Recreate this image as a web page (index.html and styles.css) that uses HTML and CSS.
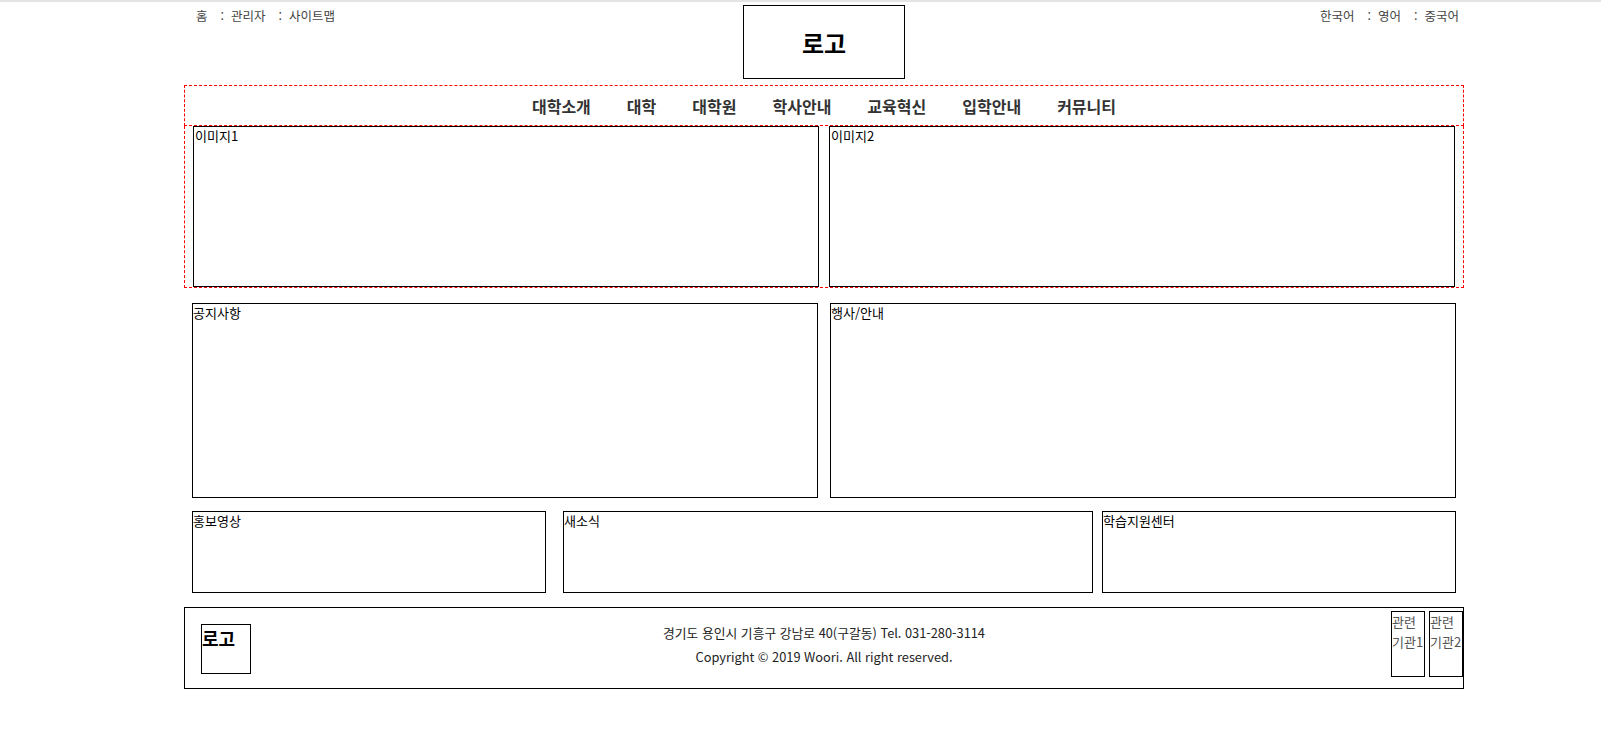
FILE: index.html
```html
<!DOCTYPE html>
<html lang="ko">
<head>
    <meta charset="utf-8">
    <title>우리대학교</title>
    <link rel="stylesheet" href="styles.css">
</head>
<body>
    <div class="wrap">
        <!-- 상단 헤더 -->
        <header class="header">
            <ul class="util util-left">
                <li>홈</li>
                <li>관리자</li>
                <li>사이트맵</li>
            </ul>
            <h1 class="logo">로고</h1>
            <ul class="util util-right">
                <li>한국어</li>
                <li>영어</li>
                <li>중국어</li>
            </ul>
        </header>

        <!-- 메인 메뉴 -->
        <nav class="gnb">
            <ul>
                <li>대학소개</li>
                <li>대학</li>
                <li>대학원</li>
                <li>학사안내</li>
                <li>교육혁신</li>
                <li>입학안내</li>
                <li>커뮤니티</li>
            </ul>
        </nav>

        <!-- 비주얼 -->
        <section class="visual">
            <div class="box visual-img">이미지1</div>
            <div class="box visual-img">이미지2</div>
        </section>

        <!-- 게시판 -->
        <section class="board">
            <div class="box board-box">공지사항</div>
            <div class="box board-box">행사/안내</div>
        </section>

        <section class="banner">
            <div class="box banner-video">홍보영상</div>
            <div class="box banner-news">새소식</div>
            <div class="box banner-center">학습지원센터</div>
        </section>

        <!-- 푸터 -->
        <footer class="footer">
            <div class="footer-left">
                <div class="footer-logo">로고</div>
            </div>
            <div class="footer-info">
                <p>경기도 용인시 기흥구 강남로 40(구갈동) Tel. 031-280-3114</p>
                <p>Copyright &copy; 2019 Woori. All right reserved.</p>
            </div>
            <div class="footer-right">
                <div class="family">관련 기관1</div>
                <div class="family">관련 기관2</div>
            </div>
        </footer>
    </div>
</body>
</html>
```

FILE: styles.css
```css
* {
    box-sizing: border-box;
}

body {
    margin: 0;
    border-top: 2px solid #e4e4e4;
    font-family: "Noto Sans CJK KR", "Noto Sans", sans-serif;
    font-size: 13px;
    color: #000;
    background-color: #fff;
}

ul, p, h1 {
    margin: 0;
    padding: 0;
}

ul {
    list-style: none;
}

.wrap {
    width: 1280px;
    margin-left: 184px;
}

/* header */
.header {
    display: grid;
    grid-template-columns: 1fr auto 1fr;
    margin-bottom: 6px;
}

.util {
    display: flex;
    padding-top: 4px;
    font-size: 12.5px;
    color: #444;
}

.util-left {
    padding-left: 12px;
}

.util-right {
    justify-content: flex-end;
    padding-right: 5px;
}

.util li + li::before {
    content: ":";
    margin: 0 7px 0 13px;
}

.logo {
    width: 162px;
    height: 74px;
    margin-top: 3px;
    border: 1px solid #000;
    display: flex;
    align-items: center;
    justify-content: center;
    font-size: 24px;
    font-weight: bold;
}

/* gnb */
.gnb {
    height: 41px;
    border: 1px dashed red;
}

.gnb ul {
    display: flex;
    justify-content: center;
    align-items: center;
    gap: 36px;
    height: 100%;
    font-size: 16px;
    font-weight: bold;
    color: #333;
}

/* boxes */
.box {
    border: 1px solid #000;
    line-height: 1.45;
}

.visual {
    display: flex;
    gap: 10px;
    padding: 0 8px;
    border: 1px dashed red;
    border-top: none;
}

.visual-img {
    width: 626px;
    height: 161px;
    padding-left: 1px;
}

.board {
    display: flex;
    gap: 12px;
    padding: 0 8px;
    margin-top: 15px;
}

.board-box {
    width: 626px;
    height: 195px;
}

.banner {
    display: flex;
    padding: 0 8px;
    margin-top: 13px;
}

.banner .box {
    height: 82px;
}

.banner-video {
    width: 354px;
}

.banner-news {
    width: 530px;
    margin-left: 17px;
}

.banner-center {
    width: 354px;
    margin-left: 9px;
}

/* footer */
.footer {
    display: grid;
    grid-template-columns: 1fr auto 1fr;
    align-items: start;
    height: 82px;
    margin-top: 14px;
    border: 1px solid #000;
}

.footer-logo {
    width: 50px;
    height: 50px;
    margin: 16px 0 0 16px;
    border: 1px solid #000;
    font-size: 18px;
    font-weight: bold;
    line-height: 26px;
}

.footer-info {
    padding-top: 13px;
    text-align: center;
    font-size: 12.8px;
    line-height: 24px;
    color: #222;
}

.footer-right {
    display: flex;
    justify-content: flex-end;
    gap: 4px;
    padding-top: 3px;
}

.family {
    width: 34px;
    height: 66px;
    border: 1px solid #000;
    font-size: 13px;
    line-height: 20px;
    color: #555;
}
```
